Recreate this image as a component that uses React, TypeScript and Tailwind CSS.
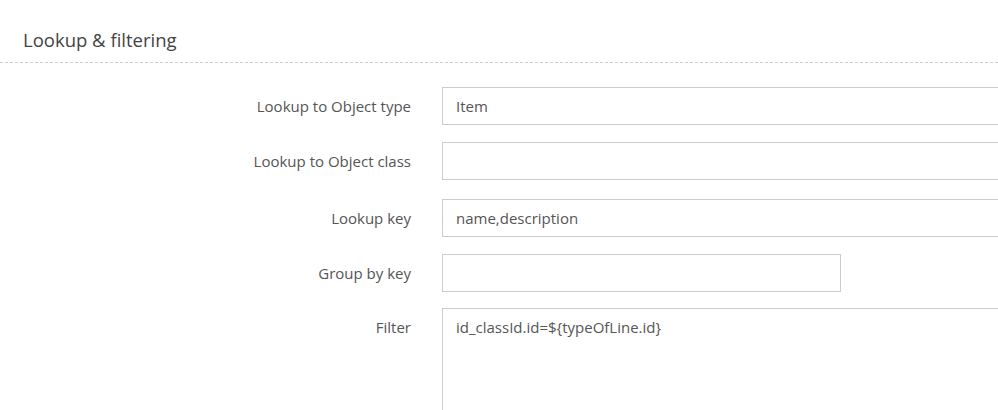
import React from 'react'

const FIELDS = [
  { label: 'Lookup to Object type', value: 'Item', wide: true, gap: 'mt-[24px]' },
  { label: 'Lookup to Object class', value: '', wide: true, gap: 'mt-[17px]' },
  { label: 'Lookup key', value: 'name,description', wide: true, gap: 'mt-[19px]' },
  { label: 'Group by key', value: '', wide: false, gap: 'mt-[17px]' },
]

export default function App() {
  return (
    <div className="h-[410px] bg-white overflow-hidden text-[#555]" style={{ fontFamily: "'Open Sans', sans-serif" }}>
      {/* Section header */}
      <div className="pt-[28px] pb-[10px] pl-[23px] border-b border-dashed border-[#ccc]">
        <h2 className="text-[18.5px] leading-[24px] text-[#444] font-normal">Lookup &amp; filtering</h2>
      </div>

      {/* Form */}
      <div className="flex flex-col">
        {FIELDS.map((f) => (
          <div key={f.label} className={`flex items-center ${f.gap}`}>
            <label className="w-[411px] shrink-0 text-right text-[15px]">{f.label}</label>
            <div className="ml-[31px] flex-1 min-w-0">
              <input
                readOnly
                value={f.value}
                className={`block h-[38px] border border-[#ccc] px-[13px] text-[15px] text-[#555] outline-none ${f.wide ? 'w-[600px]' : 'w-[399px]'}`}
              />
            </div>
          </div>
        ))}
        <div className="flex items-start mt-[16px]">
          <label className="w-[411px] shrink-0 text-right text-[15px] pt-[8px]">Filter</label>
          <div className="ml-[31px] flex-1 min-w-0">
            <textarea
              readOnly
              value="id_classId.id=${typeOfLine.id}"
              className="block h-[130px] w-[600px] resize-none border border-[#ccc] px-[13px] py-[7px] text-[15px] text-[#555] outline-none"
            />
          </div>
        </div>
      </div>
    </div>
  )
}
